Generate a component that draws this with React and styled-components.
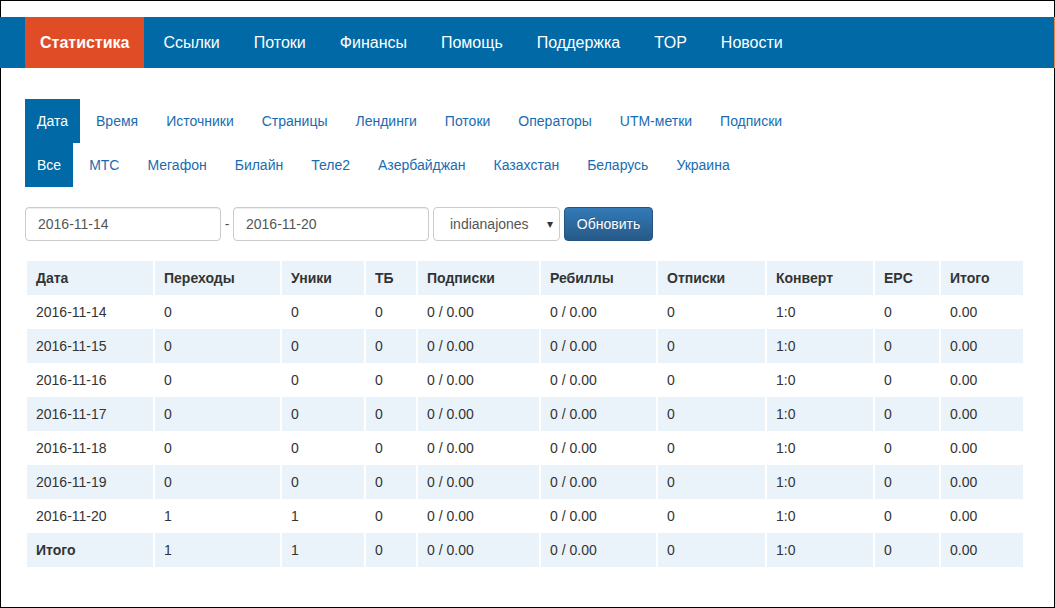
import React from 'react';
import styled, { createGlobalStyle } from 'styled-components';

const GlobalStyle = createGlobalStyle`
  * { box-sizing: border-box; }
  body {
    margin: 0;
    background: #fff;
    font-family: 'Liberation Sans', Arial, sans-serif;
    font-size: 14px;
    color: #333;
  }
`;

const navItems = ['Статистика', 'Ссылки', 'Потоки', 'Финансы', 'Помощь', 'Поддержка', 'TOP', 'Новости'];
const reportTabs = ['Дата', 'Время', 'Источники', 'Страницы', 'Лендинги', 'Потоки', 'Операторы', 'UTM-метки', 'Подписки'];
const operatorTabs = ['Все', 'МТС', 'Мегафон', 'Билайн', 'Теле2', 'Азербайджан', 'Казахстан', 'Беларусь', 'Украина'];

const columns = [
  { title: 'Дата', width: 126 },
  { title: 'Переходы', width: 125 },
  { title: 'Уники', width: 82 },
  { title: 'ТБ', width: 50 },
  { title: 'Подписки', width: 121 },
  { title: 'Ребиллы', width: 115 },
  { title: 'Отписки', width: 107 },
  { title: 'Конверт', width: 106 },
  { title: 'EPC', width: 64 },
  { title: 'Итого', width: 82 },
];

const days = ['2016-11-14', '2016-11-15', '2016-11-16', '2016-11-17', '2016-11-18', '2016-11-19', '2016-11-20'];
const rows = days.map((d) => {
  const hit = d === '2016-11-20' ? '1' : '0';
  return [d, hit, hit, '0', '0 / 0.00', '0 / 0.00', '0', '1:0', '0', '0.00'];
});
const total = ['Итого', '1', '1', '0', '0 / 0.00', '0 / 0.00', '0', '1:0', '0', '0.00'];

const App = () => (
  <>
    <GlobalStyle />
    <Frame>
      <Navbar>
        {navItems.map((item, i) => (
          <NavLink key={item} $active={i === 0}>{item}</NavLink>
        ))}
      </Navbar>
      <Content>
        <Tabs>
          {reportTabs.map((t, i) => (
            <Tab key={t} $active={i === 0}>{t}</Tab>
          ))}
        </Tabs>
        <Tabs>
          {operatorTabs.map((t, i) => (
            <Tab key={t} $active={i === 0}>{t}</Tab>
          ))}
        </Tabs>

        <FilterRow>
          <DateInput defaultValue='2016-11-14' />
          <Dash>-</Dash>
          <DateInput defaultValue='2016-11-20' />
          <SelectWrap>
            <span>indianajones</span>
            <Caret>▾</Caret>
          </SelectWrap>
          <Button>Обновить</Button>
        </FilterRow>

        <StatsTable>
          <thead>
            <tr>
              {columns.map((c) => (
                <th key={c.title} style={{ width: c.width }}>{c.title}</th>
              ))}
            </tr>
          </thead>
          <tbody>
            {rows.map((r) => (
              <tr key={r[0]}>
                {r.map((v, i) => (
                  <td key={i}>{v}</td>
                ))}
              </tr>
            ))}
            <TotalRow>
              {total.map((v, i) => (
                <td key={i}>{v}</td>
              ))}
            </TotalRow>
          </tbody>
        </StatsTable>
      </Content>
    </Frame>
  </>
);

const Frame = styled.div`
  height: 608px;
  border: 1px solid #000;
  padding-top: 16px;
`;

const Navbar = styled.nav`
  display: flex;
  gap: 4px;
  height: 51px;
  margin: 0 -1px;
  padding-left: 25px;
  background: #0069a6;
  border-right: 1px solid #e8844f;
`;

const NavLink = styled.a`
  display: flex;
  align-items: center;
  padding: 0 15px;
  font-size: 16px;
  color: #fff;
  font-weight: ${(p) => (p.$active ? 'bold' : 'normal')};
  background: ${(p) => (p.$active ? '#e04c26' : 'transparent')};
  cursor: pointer;
`;

const Content = styled.div`
  padding: 31px 24px 0;
`;

const Tabs = styled.ul`
  display: flex;
  gap: 4px;
  margin: 0;
  padding: 0;
  list-style: none;
`;

const Tab = styled.li`
  height: 44px;
  line-height: 44px;
  padding: 0 12px;
  font-size: 14px;
  color: ${(p) => (p.$active ? '#fff' : '#1a6cb0')};
  background: ${(p) => (p.$active ? '#0069a6' : 'transparent')};
  cursor: pointer;
`;

const FilterRow = styled.div`
  display: flex;
  align-items: center;
  margin-top: 20px;
  height: 34px;
`;

const DateInput = styled.input`
  width: 196px;
  height: 34px;
  padding: 0 12px;
  border: 1px solid #ccc;
  border-radius: 4px;
  font-family: inherit;
  font-size: 14px;
  color: #555;
  box-shadow: inset 0 1px 1px rgba(0, 0, 0, 0.075);
`;

const Dash = styled.span`
  width: 12px;
  text-align: center;
  color: #555;
`;

const SelectWrap = styled.div`
  display: flex;
  align-items: center;
  justify-content: space-between;
  width: 127px;
  height: 34px;
  margin-left: 4px;
  padding: 0 6px 0 16px;
  border: 1px solid #ccc;
  border-radius: 4px;
  color: #555;
`;

const Caret = styled.span`
  font-size: 12px;
  color: #333;
`;

const Button = styled.button`
  width: 89px;
  height: 34px;
  margin-left: 4px;
  border: 1px solid #245580;
  border-radius: 4px;
  background: linear-gradient(to bottom, #337ab7 0, #265a88 100%);
  color: #fff;
  font-family: inherit;
  font-size: 14px;
  text-shadow: 0 -1px 0 rgba(0, 0, 0, 0.2);
  cursor: pointer;
`;

const StatsTable = styled.table`
  margin-top: 20px;
  width: 1000px;
  table-layout: fixed;
  border-collapse: separate;
  border-spacing: 2px 0;

  th,
  td {
    height: 34px;
    padding: 0 9px;
    text-align: left;
    vertical-align: middle;
    font-size: 14px;
    color: #333;
  }
  th {
    font-weight: bold;
    background: #eaf3fa;
  }
  tbody tr:nth-child(even) td {
    background: #eaf3fa;
  }
`;

const TotalRow = styled.tr`
  td:first-child {
    font-weight: bold;
  }
`;

export default App;
